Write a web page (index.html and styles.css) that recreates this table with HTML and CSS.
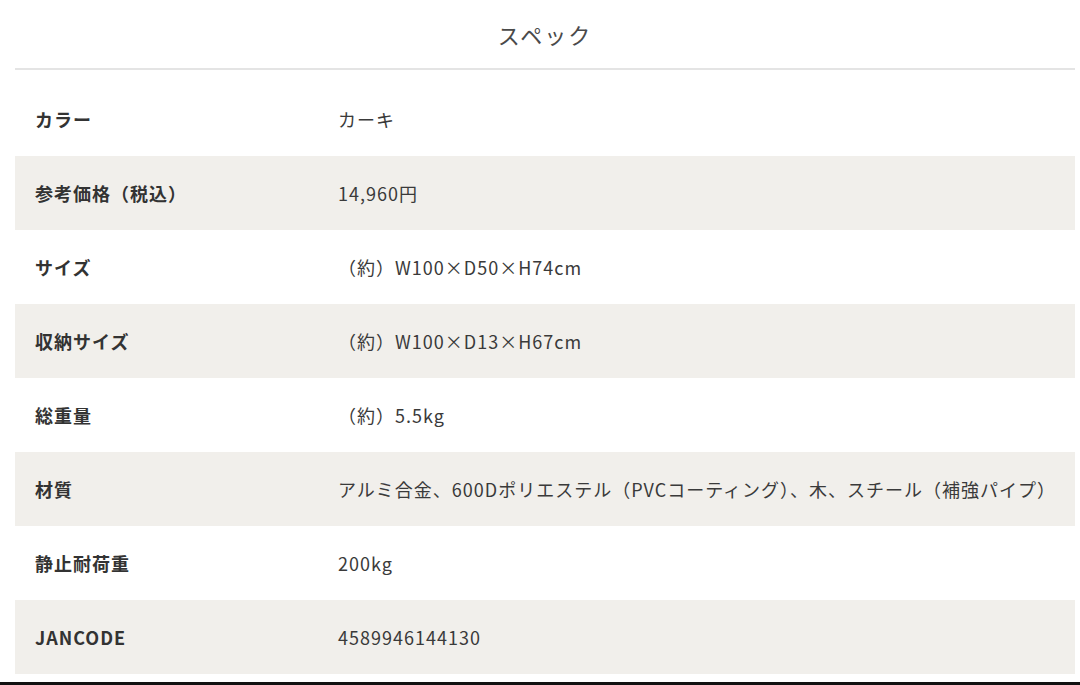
FILE: index.html
```html
<!DOCTYPE html>
<html lang="ja">
<head>
<meta charset="utf-8">
<link rel="stylesheet" href="styles.css">
</head>
<body>
<section class="spec">
  <h2 class="spec-title">スペック</h2>
  <table class="spec-table">
    <tr><th>カラー</th><td>カーキ</td></tr>
    <tr><th>参考価格（税込）</th><td>14,960円</td></tr>
    <tr><th>サイズ</th><td>（約）W100×D50×H74cm</td></tr>
    <tr><th>収納サイズ</th><td>（約）W100×D13×H67cm</td></tr>
    <tr><th>総重量</th><td>（約）5.5kg</td></tr>
    <tr><th>材質</th><td>アルミ合金、600Dポリエステル（PVCコーティング）、木、スチール（補強パイプ）</td></tr>
    <tr><th>静止耐荷重</th><td>200kg</td></tr>
    <tr><th>JANCODE</th><td>4589946144130</td></tr>
  </table>
</section>
<div class="bottom-bar"></div>
</body>
</html>
```
FILE: styles.css
```css
html, body {
  margin: 0;
  padding: 0;
  background: #fff;
}
body {
  width: 1080px;
  height: 685px;
  overflow: hidden;
  font-family: "Noto Sans CJK JP", "Noto Sans", sans-serif;
  color: #333;
  display: flex;
  flex-direction: column;
}
.spec {
  padding: 0 5px 0 15px;
  flex: 1;
}
.spec-title {
  margin: 0;
  height: 68px;
  line-height: 68px;
  text-align: center;
  font-size: 22px;
  font-weight: 400;
  letter-spacing: 2px;
  color: #4a4a4a;
  border-bottom: 2px solid #e4e4e4;
}
.spec-table {
  width: 1060px;
  margin-top: 12px;
  border-collapse: collapse;
}
.spec-table tr {
  height: 74px;
}
.spec-table tr:nth-child(even) {
  background: #f1efeb;
}
.spec-table th {
  width: 303px;
  padding: 0 0 0 20px;
  text-align: left;
  font-size: 18px;
  font-weight: 700;
  color: #333;
  letter-spacing: 1px;
}
.spec-table td {
  padding: 0;
  font-size: 18px;
  font-weight: 400;
  color: #3a3a3a;
  letter-spacing: 1px;
}
.bottom-bar {
  height: 3px;
  background: #111;
  margin-top: auto;
}
```
